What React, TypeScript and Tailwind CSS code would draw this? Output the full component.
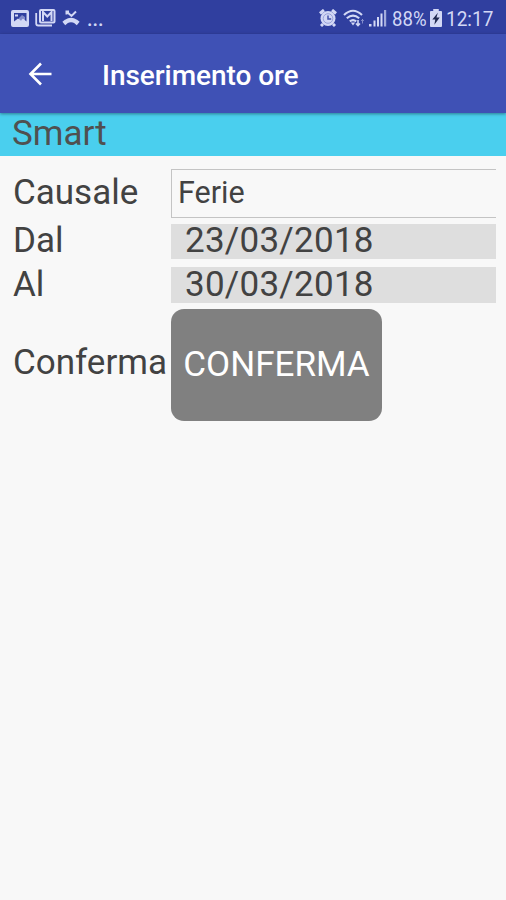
import type { ReactNode } from 'react'

interface FieldRowProps {
    label: string
    className: string
    labelClassName?: string
    children: ReactNode
}

function FieldRow({ label, className, labelClassName = '', children }: FieldRowProps) {
    return (
        <div className={`flex ${className}`}>
            <span className={`w-[157px] shrink-0 whitespace-nowrap ${labelClassName}`}>{label}</span>
            {children}
        </div>
    )
}

function StatusBar() {
    return (
        <div className="h-[34px] bg-[#303f9f] flex items-center text-[#d3d8f5] shrink-0">
            <svg className="ml-[11px] mt-[2px]" width="18" height="17" viewBox="0 0 18 17" fill="currentColor">
                <path fillRule="evenodd" d="M2 0h14q2 0 2 2v13q0 2-2 2H2q-2 0-2-2V2q0-2 2-2zM3 3v8.500l4-3 3 2 2-2 3.500 3V3zM4 4.500h3v2H4z" />
                <path d="M8 8l3-3 3 2v3H8z" opacity="0.5" />
            </svg>
            <svg className="ml-[6px] mt-[2px]" width="21" height="18" viewBox="0 0 21 18" fill="none" stroke="currentColor">
                <path d="M1.200 4v10.500q0 2 2 2H17" strokeWidth="1.800" />
                <rect x="5" y="1" width="14.500" height="12.500" rx="1" strokeWidth="2" />
                <path d="M8 12V3l4.300 4.500L16.500 3v9" strokeWidth="2" />
            </svg>
            <svg className="ml-[6px] mt-[2px]" width="18" height="16" viewBox="0 0 18 16" fill="none" stroke="currentColor">
                <path d="M4.500 4.500V1.500H7M5 2l4.500 4L14 1.500" strokeWidth="2" />
                <path d="M1.800 13.500l2.400-2q4.800-3 9.600 0l2.400 2" strokeWidth="4.400" />
            </svg>
            <span className="ml-[7px] mt-[4px] text-[20px] leading-none font-medium">...</span>

            <svg className="ml-auto mt-[2px]" width="18" height="18" viewBox="0 0 18 18" fill="none" stroke="currentColor">
                <path d="M1 4.500l4-3.500M17 4.500L13 1M4 15l-2 2M14 15l2 2" strokeWidth="3" />
                <circle cx="9" cy="9.500" r="7.500" fill="currentColor" stroke="none" />
                <circle cx="9" cy="9.500" r="4.800" stroke="#8993d2" strokeWidth="0.800" />
                <path d="M9 6.500V10h3.200" stroke="#4452aa" strokeWidth="1.500" />
            </svg>
            <svg className="ml-[6px] mt-[2px]" width="22" height="18" viewBox="0 0 22 18" fill="none" stroke="currentColor" strokeWidth="2.100">
                <path d="M1 6q9-8.500 18 0M3.800 9.300q6.200-5.500 12.400 0M6.800 12.300q3.200-2.500 6.400 0" />
                <path d="M7.800 13.500h4.400l-2.200 3z" fill="currentColor" stroke="none" />
                <path d="M15 11v5.500m-2-2L15 16.500l2-2" strokeWidth="1.600" />
                <path d="M19.500 14.500v-4m-1.400 1.400l1.400-1.400 1.400 1.400" strokeWidth="1" opacity="0.5" />
            </svg>
            <svg className="ml-[4px] mt-[2px]" width="18" height="18" viewBox="0 0 18 18" fill="currentColor">
                <path d="M0 15h2.500v2.500H0zM4.500 11.500h2v6h-2zM8 8h2v9.500H8zM11.500 4.500h2v13h-2z" />
                <path d="M15 1h2.200v16.500H15z" opacity="0.7" />
            </svg>
            <span className="ml-[5px] mt-[3px] w-[36px] text-[20px] leading-none">
                <span className="block w-[42px] origin-left scale-x-[0.93]">88%</span>
            </span>
            <svg className="ml-[2px] mt-[2px]" width="12" height="18" viewBox="0 0 13 19" fill="currentColor" preserveAspectRatio="none">
                <path d="M3.500 0h6v2H12q1 0 1 1v15q0 1-1 1H1q-1 0-1-1V3q0-1 1-1h2.500z" />
                <path d="M8.500 4L2.500 11h3.200l-1 5.500L10.500 9H7z" fill="#202850" />
            </svg>
            <span className="ml-[4px] mr-[13px] mt-[3px] w-[47px] text-[20px] leading-none">
                <span className="block w-[52px] origin-left scale-x-[0.95]">12:17</span>
            </span>
        </div>
    )
}

export default function App() {
    return (
        <div className="w-[506px] h-[900px] overflow-hidden bg-[#f8f8f8] flex flex-col font-[Roboto,sans-serif] text-[#424242]">
            <StatusBar />
            <header className="relative h-[79px] shrink-0 bg-[#3f51b5] flex items-center text-white shadow-[0_1px_3px_rgba(0,0,0,0.4)]">
                <button type="button" aria-label="Indietro" className="ml-[28px]">
                    <svg width="24" height="24" viewBox="0 0 24 24" fill="none" stroke="currentColor" strokeWidth="2.600">
                        <path d="M23.500 12H2.500M13 1.500L2.500 12 13 22.500" />
                    </svg>
                </button>
                <h1 className="ml-[50px] mt-[4px] text-[28px] leading-none font-medium tracking-[-0.05px]">Inserimento ore</h1>
            </header>
            <div className="h-[43px] shrink-0 bg-[#4acfee] pl-[12px] text-[35px] leading-[41px] text-[#505050]">Smart</div>

            <form className="pt-[13px] pl-[13px] pr-[10px] text-[35px] leading-[35px]">
                <FieldRow label="Causale" className="h-[49px]" labelClassName="leading-[47px]">
                    <div className="ml-px h-full flex-1 border border-r-0 border-[#c4c4c4] pl-[6px] text-[30.5px] leading-[45px]">Ferie</div>
                </FieldRow>
                <FieldRow label="Dal" className="mt-[6px] h-[35px]" labelClassName="leading-[34px]">
                    <div className="ml-px flex-1 bg-[#dedede] pl-[14px] leading-[34px] tracking-[0.25px]">23/03/2018</div>
                </FieldRow>
                <FieldRow label="Al" className="mt-[8px] h-[36px]">
                    <div className="ml-px flex-1 bg-[#dedede] pl-[14px] tracking-[0.25px]">30/03/2018</div>
                </FieldRow>
                <FieldRow label="Conferma" className="mt-[6px] h-[112px]" labelClassName="leading-[108px]">
                    <button type="button" className="ml-px h-full w-[211px] rounded-[13px] bg-[#808080] pb-[2px] text-white">
                        CONFERMA
                    </button>
                </FieldRow>
            </form>
        </div>
    )
}
